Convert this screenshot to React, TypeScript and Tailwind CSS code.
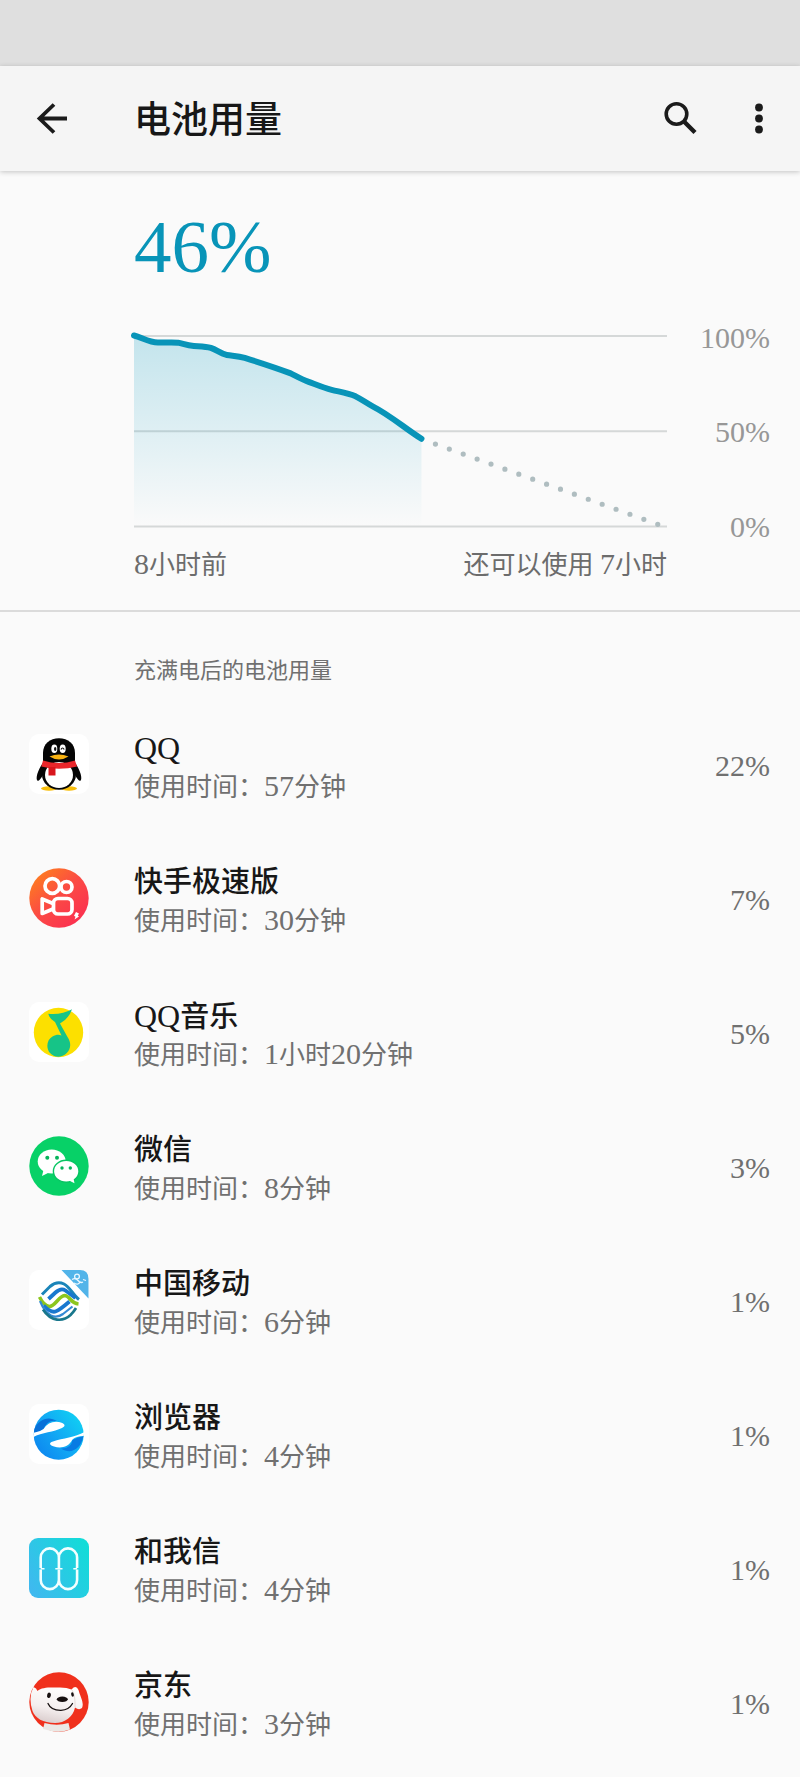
import type { ReactNode } from "react";

function QQIcon() {
  return (
    <>
      <rect width="60" height="60" rx="10" fill="#fff" />
      <ellipse cx="20" cy="54.5" rx="8" ry="2.2" fill="#f7bd0b" />
      <ellipse cx="40" cy="54.5" rx="8" ry="2.2" fill="#f7bd0b" />
      <path d="M14.5 28C8 37 6.500 45 8.500 46.800C10 47.500 13 43 14.500 40L45.500 40C47 43 50 47.500 51.500 46.800C53.500 45 52 37 45.500 28Z" fill="#050505" />
      <ellipse cx="30" cy="40.500" rx="17" ry="15.300" fill="#050505" />
      <path d="M14 28V19C14 10 21 4.300 30 4.300S46 10 46 19V28Z" fill="#050505" />
      <ellipse cx="30" cy="41" rx="14" ry="13" fill="#fff" />
      <ellipse cx="25.300" cy="14.700" rx="3" ry="4.300" fill="#fff" />
      <ellipse cx="33.700" cy="14.700" rx="3" ry="4.300" fill="#fff" />
      <ellipse cx="26.200" cy="15" rx="1.200" ry="1.900" fill="#111" />
      <path d="M32 15.500Q33.500 12.500 35.200 15.500" fill="none" stroke="#111" strokeWidth="1.200" />
      <path d="M20.500 22.500Q30 18.300 39.500 22.500Q30 28.500 20.500 22.500Z" fill="#f9b312" />
      <path d="M14 26.500Q30 31.500 46 26.500L48 32.500Q30 37 12.300 32.500Z" fill="#e9262b" />
      <path d="M19.500 33H26.500V41.500H19.500Z" fill="#d8161d" />
    </>
  );
}

function KuaishouIcon() {
  return (
    <>
      <defs>
        <linearGradient id="kuaishou" x1="0" y1="0" x2="0.9" y2="1">
          <stop offset="0" stopColor="#ff8a16" />
          <stop offset="0.5" stopColor="#fb4b44" />
          <stop offset="1" stopColor="#fb2b52" />
        </linearGradient>
      </defs>
      <circle cx="30" cy="30" r="29.700" fill="url(#kuaishou)" />
      <g fill="none" stroke="#fff" strokeWidth="3.700" strokeLinejoin="round">
        <circle cx="23.300" cy="18" r="7.300" />
        <circle cx="37.500" cy="19" r="5.500" />
        <rect x="24.500" y="30.500" width="18.500" height="15.500" rx="4.500" />
        <path d="M24 35.500L13.200 31V45.500L24 41" />
      </g>
      <path d="M47 44L50 45.500L48.800 47.500L50 48.500L45.500 51.500L46.500 48.800L45 47.800Z" fill="#fff" />
    </>
  );
}

function QQMusicIcon() {
  return (
    <>
      <rect width="60" height="60" rx="10" fill="#fff" />
      <circle cx="29.500" cy="30.500" r="24.700" fill="#fce000" />
      <path d="M19.300 11.800Q33 13 43 7.300Q40 16.500 31 21.500L38.500 35C42.500 41 42 47 37.500 51.300C33 56 25 55.800 21 51C16.500 45.500 18 37.500 23.500 34.500C27 32.500 30 32.500 32.500 33.500L26 20Q20.500 17 19.300 11.800Z" fill="#16c487" />
    </>
  );
}

function WeChatIcon() {
  return (
    <>
      <circle cx="30" cy="30" r="29.700" fill="#07d167" />
      <ellipse cx="22.700" cy="25.500" rx="14" ry="12" fill="#fff" />
      <path d="M14.500 34L13 40L20 36.500Z" fill="#fff" />
      <ellipse cx="37.200" cy="35.200" rx="12.800" ry="11" fill="#fff" stroke="#07c562" strokeWidth="1.400" />
      <path d="M40 44.500L45.500 47.300L44.500 42.500Z" fill="#fff" />
      <g fill="#07b45b">
        <circle cx="18.300" cy="21.700" r="2" />
        <circle cx="28" cy="21.700" r="2" />
        <circle cx="33" cy="32" r="1.700" />
        <circle cx="41.300" cy="32" r="1.700" />
      </g>
    </>
  );
}

function ChinaMobileIcon() {
  return (
    <>
      <rect width="60" height="60" rx="10" fill="#fff" />
      <path d="M32.500 0H51Q59.500 0 59.500 9V28.500Z" fill="#52b4e9" />
      <g fill="none" stroke="#e9f7ff" strokeWidth="1.300">
        <circle cx="48" cy="6.500" r="2.400" />
        <path d="M43 9.500Q46.500 7.500 49 10.500T54 12M45 13Q49 16 51.500 11.500M54 9.500L57 10.500" />
      </g>
      <g fill="none">
        <path d="M13 24.500L21 16.500Q28 10.500 35 14C41 17 44 25 50 29.500" stroke="#1b85b9" strokeWidth="3" />
        <path d="M19.500 29L26.500 22.500Q32 17.500 36.500 20.500L46.500 28" stroke="#1877ce" strokeWidth="3.800" />
        <path d="M10.500 27Q15 36 20.500 36.500C26 36.500 30 26 35.500 25.500Q38 25.500 41.500 29.500T49.500 34" stroke="#8cc61e" strokeWidth="3.500" />
        <path d="M14.500 35.500Q22 43 26.500 41.500Q30 40.500 40.500 31.500" stroke="#1877ce" strokeWidth="3.800" />
        <path d="M11 31Q15.500 42 22 45.500Q28 48.500 34 44L43.500 36.500" stroke="#3489d4" strokeWidth="2.200" />
        <path d="M14 39.500C22 52 34 52 41.500 45Q45 41.500 47 38" stroke="#19778c" strokeWidth="2.700" />
      </g>
    </>
  );
}

function BrowserIcon() {
  return (
    <>
      <defs>
        <linearGradient id="browser" x1="1" y1="0.100" x2="0" y2="0.900">
          <stop offset="0" stopColor="#10d5f3" />
          <stop offset="0.500" stopColor="#12aaf4" />
          <stop offset="1" stopColor="#0d82ef" />
        </linearGradient>
      </defs>
      <rect width="60" height="60" rx="10" fill="#fff" />
      <circle cx="29.700" cy="30.700" r="25" fill="url(#browser)" />
      <path d="M5.500 25C9 16 19 11 28 17Q18 15 14.500 25.500Q10 28 5 28.500Z" fill="#0870d8" />
      <path d="M54.500 32C52 45 42 51 32 44.500Q42 45 43.500 36Q49 33 54.500 32Z" fill="#087be3" />
      <path d="M4 33.200L5 28.800Q11 28 14.500 25Q20 16.500 30 18C35 19 38 21.500 33 24C25 28 13 28.500 4 33.200Z" fill="#fff" />
      <path d="M55.500 28L54.600 32Q47 32 43.500 35.500C39 44 31 44.500 25 42.500C21 41.500 19 39 24 37.500C34 34 46 33.500 55.500 28Z" fill="#fff" />
    </>
  );
}

function HeWoXinIcon() {
  return (
    <>
      <defs>
        <linearGradient id="hewoxin" x1="0" y1="0.800" x2="1" y2="0.200">
          <stop offset="0" stopColor="#3fb9ef" />
          <stop offset="1" stopColor="#12dcd8" />
        </linearGradient>
      </defs>
      <rect width="60" height="60" rx="9" fill="url(#hewoxin)" />
      <g fill="none" stroke="#f3ffff" strokeWidth="2.600">
        <path d="M11.700 30V19.500A9.100 9.100 0 0 1 29.900 19.500V30M29.900 19.500A9.100 9.100 0 0 1 48.100 19.500V30" />
        <path d="M11.700 31.500V42A9.100 9.100 0 0 0 29.900 42V31.500M29.900 42A9.100 9.100 0 0 0 48.100 42V31.500" />
        <path d="M11.700 30.700H15.500M26.300 30.700H33.500M44.300 30.700H48.100" strokeWidth="1.500" />
      </g>
    </>
  );
}

function JDIcon() {
  return (
    <>
      <defs>
        <linearGradient id="dog" x1="0.600" y1="0" x2="0.300" y2="1">
          <stop offset="0" stopColor="#fff" />
          <stop offset="0.600" stopColor="#f4eeee" />
          <stop offset="1" stopColor="#d9cccc" />
        </linearGradient>
      </defs>
      <circle cx="30" cy="30" r="29.700" fill="#f0301c" />
      <path d="M15.500 51Q28 54.500 39.500 51L41 57.500Q30 62 14 57Z" fill="#ebe8e5" />
      <path d="M4.500 15Q7.500 16 8.500 19C13 14.500 23 15.500 31 15.500Q38 15.500 42.500 17.500Q47 12.500 49.500 18C51 24 55.500 31 53 36Q50 38.500 46 35.500C44 45 36 51 26 51C14 51 6 46 3.500 39Q-1 25 4.500 15Z" fill="url(#dog)" />
      <path d="M43 18Q46.500 23 46 35" fill="none" stroke="#dfd3d0" strokeWidth="0.800" />
      <ellipse cx="20" cy="23.300" rx="1.900" ry="2.700" fill="#171010" transform="rotate(15 20 23.300)" />
      <ellipse cx="43.500" cy="22.500" rx="1.300" ry="2.300" fill="#171010" transform="rotate(-12 43.500 22.500)" />
      <ellipse cx="33.300" cy="27.300" rx="5.500" ry="2.700" fill="#171010" />
      <path d="M19 31.500Q22 38.500 32 38.300Q40 38 43.500 31.500" fill="none" stroke="#171010" strokeWidth="1.300" strokeLinecap="round" />
    </>
  );
}

type AppUsage = { name: string; time: string; percent: string; icon: ReactNode };

const apps: AppUsage[] = [
  { name: "QQ", time: "57分钟", percent: "22%", icon: <QQIcon /> },
  { name: "快手极速版", time: "30分钟", percent: "7%", icon: <KuaishouIcon /> },
  { name: "QQ音乐", time: "1小时20分钟", percent: "5%", icon: <QQMusicIcon /> },
  { name: "微信", time: "8分钟", percent: "3%", icon: <WeChatIcon /> },
  { name: "中国移动", time: "6分钟", percent: "1%", icon: <ChinaMobileIcon /> },
  { name: "浏览器", time: "4分钟", percent: "1%", icon: <BrowserIcon /> },
  { name: "和我信", time: "4分钟", percent: "1%", icon: <HeWoXinIcon /> },
  { name: "京东", time: "3分钟", percent: "1%", icon: <JDIcon /> },
];

/* Latin letters and digits are set a little larger than the Chinese around them. */
function Mixed({ text, latin }: { text: string; latin: string }) {
  return (
    <>
      {text.split(/([A-Za-z0-9]+)/).map((part, i) =>
        i % 2 === 1 ? (
          <span key={i} className={latin}>
            {part}
          </span>
        ) : (
          part
        ),
      )}
    </>
  );
}

function BatteryChart() {
  return (
    <svg viewBox="0 0 534 221" className="block w-full overflow-visible" role="img" aria-label="电池电量">
      <defs>
        <linearGradient id="level" x1="0" y1="0" x2="0" y2="1">
          <stop offset="0" stopColor="#0097bd" stopOpacity="0.220" />
          <stop offset="1" stopColor="#0097bd" stopOpacity="0" />
        </linearGradient>
      </defs>
      <g transform="translate(0 15)">
        <path d="M0 0H534M0 95.500H534M0 191H534" stroke="#d5d8d8" strokeWidth="2" />
        <path
          d="M0 0C8 2 15 6.500 24 6.500C30 7 36 6 44 6.700C50 8 53 9.500 60 10C67 10.500 72 10.500 77 12C83 14 87 18 93 19C99 20 104 20 111 22C127 27 141 31.500 157 37.500C163 40.500 168 43.500 175 46C183 49 190 52 198 54C206 56 214 57 222 60.500C229 64 233 67.500 240 71C256 79 272 93 288 103V191H0Z"
          fill="url(#level)"
        />
        <path
          d="M0 -0.500C8 1.500 15 6.500 24 6.500C30 7 36 6 44 6.700C50 8 53 9.500 60 10C67 10.500 72 10.500 77 12C83 14 87 18 93 19C99 20 104 20 111 22C127 27 141 31.500 157 37.500C163 40.500 168 43.500 175 46C183 49 190 52 198 54C206 56 214 57 222 60.500C229 64 233 67.500 240 71C256 79 272 93 288 103"
          fill="none"
          stroke="#0894b8"
          strokeWidth="6"
          strokeLinecap="round"
        />
        <path d="M302 108.300L527 189.500" stroke="#afbdc0" strokeWidth="5.200" strokeLinecap="round" strokeDasharray="0 14.800" />
      </g>
    </svg>
  );
}

export default function App() {
  return (
    <div className="min-h-screen bg-[#fafafa] pb-[7px] font-['Liberation_Serif','Noto_Sans_CJK_SC',serif] text-[#171717]">
      <div className="h-[66px] bg-[#dfdfdf]" />
      <header className="flex h-[105px] items-center bg-[#f5f5f5] pr-[21px] pl-[32px] shadow-[0_1px_5px_rgba(0,0,0,0.22)]">
        <button type="button" aria-label="返回" className="size-[40px]">
          <svg viewBox="0 0 40 40" className="size-full" fill="none" stroke="#1b1b1b" strokeWidth="3.800">
            <path d="M35 19.500H8M22 5.500L7.500 19.500L22 33.500" />
          </svg>
        </button>
        <h1 className="ml-[62px] flex-1 pt-[4px] text-[37px] leading-[48px] font-medium">电池用量</h1>
        <button type="button" aria-label="搜索" className="size-[40px]">
          <svg viewBox="0 0 40 40" className="size-full" fill="none" stroke="#1b1b1b">
            <circle cx="16.500" cy="15" r="10.300" strokeWidth="3.600" />
            <path d="M24 22.500L35 33.500" strokeWidth="4.400" />
          </svg>
        </button>
        <button type="button" aria-label="更多选项" className="ml-[39px] size-[40px]">
          <svg viewBox="0 0 40 40" className="size-full" fill="#1b1b1b">
            <circle cx="20" cy="8.500" r="3.900" />
            <circle cx="20" cy="19.500" r="3.900" />
            <circle cx="20" cy="30.500" r="3.900" />
          </svg>
        </button>
      </header>

      <main>
        <section className="border-b-2 border-[#dbdbdb] pt-[36px] pr-[30px] pb-[26px] pl-[134px]">
          <p className="text-[75px] leading-[80px] text-[#0894b8]">46%</p>
          <div className="mt-[34px] flex">
            <div className="min-w-0 flex-1">
              <BatteryChart />
            </div>
            <div className="flex w-[103px] flex-col justify-between pt-[2px] text-right text-[30px] leading-[30px] text-[#979797]">
              <span>100%</span>
              <span>50%</span>
              <span>0%</span>
            </div>
          </div>
          <div className="mt-[4px] mr-[103px] flex justify-between text-[26px] leading-[36px] text-[#6c6c6c]">
            <span>
              <Mixed text="8小时前" latin="text-[30px]" />
            </span>
            <span>
              <Mixed text="还可以使用 7小时" latin="text-[30px]" />
            </span>
          </div>
        </section>

        <section>
          <h2 className="pt-[44px] pb-[11px] pl-[134px] text-[22px] leading-[30px] text-[#707070]">充满电后的电池用量</h2>
          <ul>
            {apps.map((app) => (
              <li key={app.name} className="flex h-[134px] items-center pr-[30px] pl-[29px]">
                <svg viewBox="0 0 60 60" className="size-[60px] shrink-0" aria-hidden="true">
                  {app.icon}
                </svg>
                <div className="ml-[45px] flex-1 pt-[6px]">
                  <h3 className="h-[37px] text-[29px] leading-[37px] font-medium">
                    <Mixed text={app.name} latin="text-[32px] font-normal" />
                  </h3>
                  <p className="h-[37px] text-[26px] leading-[37px] text-[#707070]">
                    <Mixed text={`使用时间：${app.time}`} latin="text-[30px]" />
                  </p>
                </div>
                <span className="pt-[4px] text-[30px] leading-[36px] text-[#707070]">{app.percent}</span>
              </li>
            ))}
          </ul>
        </section>
      </main>
    </div>
  );
}
